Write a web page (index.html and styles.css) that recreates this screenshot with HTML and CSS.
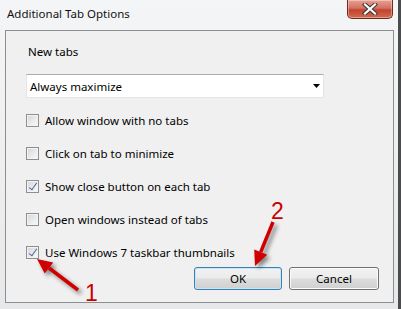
FILE: index.html
```html
<!DOCTYPE html>
<html lang="en">
<head>
  <meta charset="UTF-8">
  <title>Additional Tab Options</title>
  <link rel="stylesheet" href="styles.css">
</head>
<body>

  <div class="window">
    <div class="titlebar">
      <span class="title">Additional Tab Options</span>
      <button class="close" type="button">
        <svg width="16" height="12" viewBox="0 0 16 12">
          <path d="M3 1.5 L13 10.5 M13 1.5 L3 10.5" stroke="#3a3a3a" stroke-width="4.2" stroke-linecap="square"/>
          <path d="M3 1.5 L13 10.5 M13 1.5 L3 10.5" stroke="#ffffff" stroke-width="2.2" stroke-linecap="square"/>
        </svg>
      </button>
    </div>

    <div class="client">
      <div class="label">New tabs</div>

      <div class="select">
        <span>Always maximize</span>
        <svg width="7" height="4" viewBox="0 0 7 4"><path d="M0 0 H7 L3.5 4 Z" fill="#000"/></svg>
      </div>

      <ul class="options">
        <li><span class="check"></span>Allow window with no tabs</li>
        <li><span class="check"></span>Click on tab to minimize</li>
        <li><span class="check checked"></span>Show close button on each tab</li>
        <li><span class="check"></span>Open windows instead of tabs</li>
        <li><span class="check checked"></span>Use Windows 7 taskbar thumbnails</li>
      </ul>

      <div class="buttons">
        <button class="btn default" type="button">OK</button>
        <button class="btn cancel" type="button">Cancel</button>
      </div>
    </div>

    <!-- red annotation arrows drawn over the dialog -->
    <svg class="notes" width="401" height="309" viewBox="0 0 401 309">
      <g class="arrow">
        <line x1="78" y1="290" x2="49" y2="268" stroke="#d00000" stroke-width="3.5"/>
        <polygon points="37,259 53.2,262.5 44.7,273.6" fill="#d00000"/>
        <line x1="273" y1="222" x2="260.7" y2="252.1" stroke="#d00000" stroke-width="3.5"/>
        <polygon points="255,266 267.2,254.8 254.2,249.4" fill="#d00000"/>
      </g>
      <text x="85" y="301" class="num">1</text>
      <text x="271" y="219" class="num">2</text>
    </svg>
  </div>

</body>
</html>
```

FILE: styles.css
```css
body {
  margin: 0;
  font-family: "Noto Sans", "Open Sans", sans-serif;
  font-size: 11.5px;
  color: #000;
}

.window {
  position: relative;
  width: 401px;
  height: 309px;
  overflow: hidden;
  background: linear-gradient(180deg, #f4f5f6 0%, #eef0f2 40%, #e6e8ea 100%);
  box-sizing: border-box;
  border-right: 3px solid #4a4c4e;
}

.titlebar {
  height: 30px;
  display: flex;
  align-items: flex-start;
  justify-content: space-between;
  padding-left: 7px;
}

.title {
  margin-top: 6px;
  color: #111;
}

.close {
  width: 46px;
  height: 19px;
  margin-right: 5px;
  padding: 0;
  border: 1px solid #6e2b22;
  border-top: none;
  border-radius: 0 0 5px 5px;
  background: linear-gradient(180deg, #e7a195 0%, #d6705f 45%, #c2432f 55%, #d36a4f 100%);
  box-shadow: inset 0 0 0 1px rgba(255,255,255,0.35);
  display: flex;
  align-items: center;
  justify-content: center;
}

.client {
  height: 273px;
  width: 389px;
  margin-left: 5px;
  box-sizing: border-box;
  background: #f0f0f0;
  border: 1px solid #8c8e90;
  padding: 13px 14px 0 20px;
}

.label {
  line-height: 16px;
  margin-left: 2px;
}

.select {
  margin-top: 14px;
  width: 298px;
  height: 24px;
  box-sizing: border-box;
  background: #fff;
  border: 1px solid #e2e6ea;
  border-top-color: #acacac;
  display: flex;
  align-items: center;
  justify-content: space-between;
  padding: 0 3px 0 3px;
}

.options {
  list-style: none;
  margin: 12px 0 0 0;
  padding: 0;
  display: flex;
  flex-direction: column;
  gap: 13px;
}

.options li {
  height: 20px;
  display: flex;
  align-items: center;
  gap: 6px;
}

.check {
  width: 13px;
  height: 13px;
  box-sizing: border-box;
  border: 1px solid #8e8f8f;
  background: linear-gradient(135deg, #d2d4d8 0%, #eceded 60%, #f8f8f8 100%);
  box-shadow: inset 0 0 0 1px #f4f4f4;
  position: relative;
}

.check.checked::after {
  content: "";
  position: absolute;
  left: 4px;
  top: 0px;
  width: 3px;
  height: 8px;
  border: solid #4d5d9c;
  border-width: 0 1.5px 1.5px 0;
  transform: rotate(35deg);
}

.buttons {
  display: flex;
  justify-content: flex-end;
  gap: 7px;
  margin-top: 5px;
}

.btn {
  height: 23px;
  width: 88px;
  font-family: inherit;
  font-size: 11.5px;
  color: #000;
  border: 1px solid #707070;
  border-radius: 3px;
  background: linear-gradient(180deg, #f2f2f2 0%, #ebebeb 48%, #dddddd 52%, #cfcfcf 100%);
  box-shadow: inset 0 0 0 1px #fbfbfb;
  padding: 0;
}

.btn.cancel {
  width: 90px;
}

.btn.default {
  border-color: #3c7fb1;
  box-shadow: inset 0 0 0 1px #c6e6f7;
}

.notes {
  position: absolute;
  left: 0;
  top: 0;
  pointer-events: none;
}

.arrow {
  filter: drop-shadow(3px 3px 2px rgba(0,0,0,0.45));
}

.num {
  font-family: "Liberation Sans", Arial, sans-serif;
  font-size: 23px;
  fill: #c80000;
}
```
